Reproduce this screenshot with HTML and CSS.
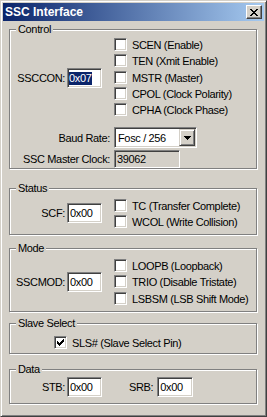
FILE: index.html
```html
<!DOCTYPE html>
<html>
<head>
<meta charset="utf-8">
<title>SSC Interface</title>
<link rel="stylesheet" href="styles.css">
</head>
<body>
<div class="window">
  <div class="titlebar">
    <span class="title">SSC Interface</span>
    <span class="close"><svg width="8" height="7" viewBox="0 0 8 7" shape-rendering="crispEdges"><path fill="#000" d="M0 0h2v1H0zM6 0h2v1H6zM1 1h2v1H1zM5 1h2v1H5zM2 2h4v1H2zM3 3h2v1H3zM2 4h4v1H2zM1 5h2v1H1zM5 5h2v1H5zM0 6h2v1H0zM6 6h2v1H6z"/></svg></span>
  </div>
  <div class="client">
    <div class="group g-control">
      <span class="legend">Control</span>
      <div class="frow">
        <div class="lead lead-ctl"><span>SSCCON:</span><span class="edit"><span class="sel">0x07</span></span></div>
        <div class="checks">
          <div class="cb"><span class="box"></span><span class="txt">SCEN (Enable)</span></div>
          <div class="cb"><span class="box"></span><span class="txt">TEN (Xmit Enable)</span></div>
          <div class="cb"><span class="box"></span><span class="txt">MSTR (Master)</span></div>
          <div class="cb"><span class="box"></span><span class="txt">CPOL (Clock Polarity)</span></div>
          <div class="cb"><span class="box"></span><span class="txt">CPHA (Clock Phase)</span></div>
        </div>
      </div>
      <div class="frow mid frow-baud">
        <span class="rlabel">Baud Rate:</span>
        <div class="combo"><span class="combo-text">Fosc / 256</span><span class="drop"><svg width="7" height="4" viewBox="0 0 7 4" shape-rendering="crispEdges"><path fill="#000" d="M0 0h7v1H0zM1 1h5v1H1zM2 2h3v1H2zM3 3h1v1H3z"/></svg></span></div>
      </div>
      <div class="frow mid frow-clock">
        <span class="rlabel">SSC Master Clock:</span>
        <span class="edit ro">39062</span>
      </div>
    </div>

    <div class="group g-status">
      <span class="legend">Status</span>
      <div class="frow">
        <div class="lead lead-status"><span>SCF:</span><span class="edit"><span class="val">0x00</span></span></div>
        <div class="checks">
          <div class="cb"><span class="box"></span><span class="txt">TC (Transfer Complete)</span></div>
          <div class="cb"><span class="box"></span><span class="txt">WCOL (Write Collision)</span></div>
        </div>
      </div>
    </div>

    <div class="group g-mode">
      <span class="legend">Mode</span>
      <div class="frow">
        <div class="lead lead-mode"><span>SSCMOD:</span><span class="edit"><span class="val">0x00</span></span></div>
        <div class="checks">
          <div class="cb"><span class="box"></span><span class="txt">LOOPB (Loopback)</span></div>
          <div class="cb"><span class="box"></span><span class="txt">TRIO (Disable Tristate)</span></div>
          <div class="cb"><span class="box"></span><span class="txt">LSBSM (LSB Shift Mode)</span></div>
        </div>
      </div>
    </div>

    <div class="group g-slave">
      <span class="legend">Slave Select</span>
      <div class="cb"><span class="box"><svg width="7" height="7" viewBox="0 0 7 7" shape-rendering="crispEdges"><path fill="#000" d="M6 0h1v1H6zM5 1h2v1H5zM0 2h1v1H0zM4 2h3v1H4zM0 3h2v1H0zM3 3h3v1H3zM0 4h5v1H0zM1 5h3v1H1zM2 6h1v1H2z"/></svg></span><span class="txt">SLS# (Slave Select Pin)</span></div>
    </div>

    <div class="group g-data">
      <span class="legend">Data</span>
      <div class="frow">
        <div class="lead"><span>STB:</span><span class="edit"><span class="val">0x00</span></span></div>
        <div class="srb"><span>SRB:</span><span class="edit wide"><span class="val">0x00</span></span></div>
      </div>
    </div>
  </div>
</div>
</body>
</html>
```
FILE: styles.css
```css
* {
  box-sizing: border-box;
}

html,
body {
  margin: 0;
  padding: 0;
}

body {
  width: 267px;
  height: 417px;
  background: #d4d0c8;
  font-family: "Liberation Sans", Arial, sans-serif;
  font-size: 11px;
  letter-spacing: -0.35px;
  color: #000;
}

.window {
  width: 267px;
  height: 417px;
  background: #d4d0c8;
  border: 1px solid;
  border-color: #d4d0c8 #404040 #404040 #d4d0c8;
  box-shadow: inset 1px 1px 0 #fff, inset -1px -1px 0 #808080;
  padding: 2px;
  display: flex;
  flex-direction: column;
}

.titlebar {
  height: 18px;
  flex: none;
  background: linear-gradient(to right, #0a246a, #a6caf0);
  display: flex;
  align-items: center;
  justify-content: space-between;
  padding: 0 2px 0 2px;
}

.title {
  color: #fff;
  font-weight: bold;
  font-size: 12px;
  letter-spacing: 0;
  line-height: 18px;
}

.close {
  width: 16px;
  height: 14px;
  background: #d4d0c8;
  border: 1px solid;
  border-color: #fff #404040 #404040 #fff;
  box-shadow: inset -1px -1px 0 #808080;
  display: flex;
  align-items: center;
  justify-content: center;
  padding-right: 1px;
}

.close svg,
.drop svg,
.box svg {
  display: block;
}

.client {
  flex: 1;
  padding: 8px 7px 0 6px;
}

.group {
  position: relative;
  border: 1px solid #808080;
  box-shadow: 1px 1px 0 #fff, inset 1px 1px 0 #fff;
}

.legend {
  position: absolute;
  top: -7px;
  left: 6px;
  padding: 0 2px;
  background: #d4d0c8;
  line-height: 13px;
  white-space: nowrap;
}

.g-control {
  height: 140px;
  padding-top: 8px;
}

.g-status {
  height: 47px;
  margin-top: 19px;
  padding-top: 10px;
}

.g-mode {
  height: 64px;
  margin-top: 13px;
  padding-top: 10px;
}

.g-slave {
  height: 31px;
  margin-top: 11px;
  padding-top: 12px;
  padding-left: 44px;
}

.g-data {
  height: 35px;
  margin-top: 15px;
  padding-top: 7px;
}

.frow {
  display: grid;
  grid-template-columns: 100px 1fr;
  column-gap: 4px;
  align-items: start;
}

.frow.mid {
  align-items: center;
}

.frow-baud {
  margin-top: 8px;
}

.frow-clock {
  margin-top: 2px;
}

.lead {
  display: flex;
  align-items: center;
  justify-content: flex-end;
  gap: 2px;
  padding-right: 8px;
  white-space: nowrap;
}

.lead-ctl {
  margin-top: 30px;
}

.lead-status {
  margin-top: 4px;
}

.lead-mode {
  margin-top: 13px;
}

.rlabel {
  text-align: right;
  white-space: nowrap;
}

.checks {
  display: flex;
  flex-direction: column;
}

.cb {
  display: flex;
  align-items: flex-start;
  height: 16.25px;
  white-space: nowrap;
}

.box {
  width: 13px;
  height: 13px;
  flex: none;
  background: #fff;
  border: 1px solid;
  border-color: #808080 #fff #fff #808080;
  box-shadow: inset 1px 1px 0 #404040, inset -1px -1px 0 #d4d0c8;
  padding: 2px;
}

.txt {
  margin-left: 5px;
  line-height: 15px;
}

.edit {
  display: flex;
  align-items: center;
  width: 35px;
  height: 20px;
  flex: none;
  background: #fff;
  border: 1px solid;
  border-color: #808080 #fff #fff #808080;
  box-shadow: inset 1px 1px 0 #404040, inset -1px -1px 0 #d4d0c8;
  padding: 0 1px;
  line-height: 18px;
  white-space: nowrap;
  overflow: hidden;
}

.edit.wide {
  width: 36px;
}

.edit .val {
  padding-left: 1px;
}

.sel {
  background: #0a246a;
  color: #fff;
  line-height: 13px;
  padding-right: 1px;
}

.edit.ro {
  width: 66px;
  height: 18px;
  background: #d4d0c8;
  line-height: 16px;
  padding-left: 2px;
}

.combo {
  display: flex;
  align-items: center;
  justify-content: space-between;
  width: 83px;
  height: 21px;
  background: #fff;
  border: 1px solid;
  border-color: #808080 #fff #fff #808080;
  box-shadow: inset 1px 1px 0 #404040, inset -1px -1px 0 #d4d0c8;
  padding: 1px 1px 1px 3px;
}

.drop {
  width: 16px;
  height: 17px;
  background: #d4d0c8;
  border: 1px solid;
  border-color: #d4d0c8 #404040 #404040 #d4d0c8;
  box-shadow: inset 1px 1px 0 #fff, inset -1px -1px 0 #808080;
  display: flex;
  align-items: center;
  justify-content: center;
  padding-left: 1px;
}

.srb {
  display: flex;
  align-items: center;
  gap: 4px;
  margin-left: 15px;
  white-space: nowrap;
}
```
